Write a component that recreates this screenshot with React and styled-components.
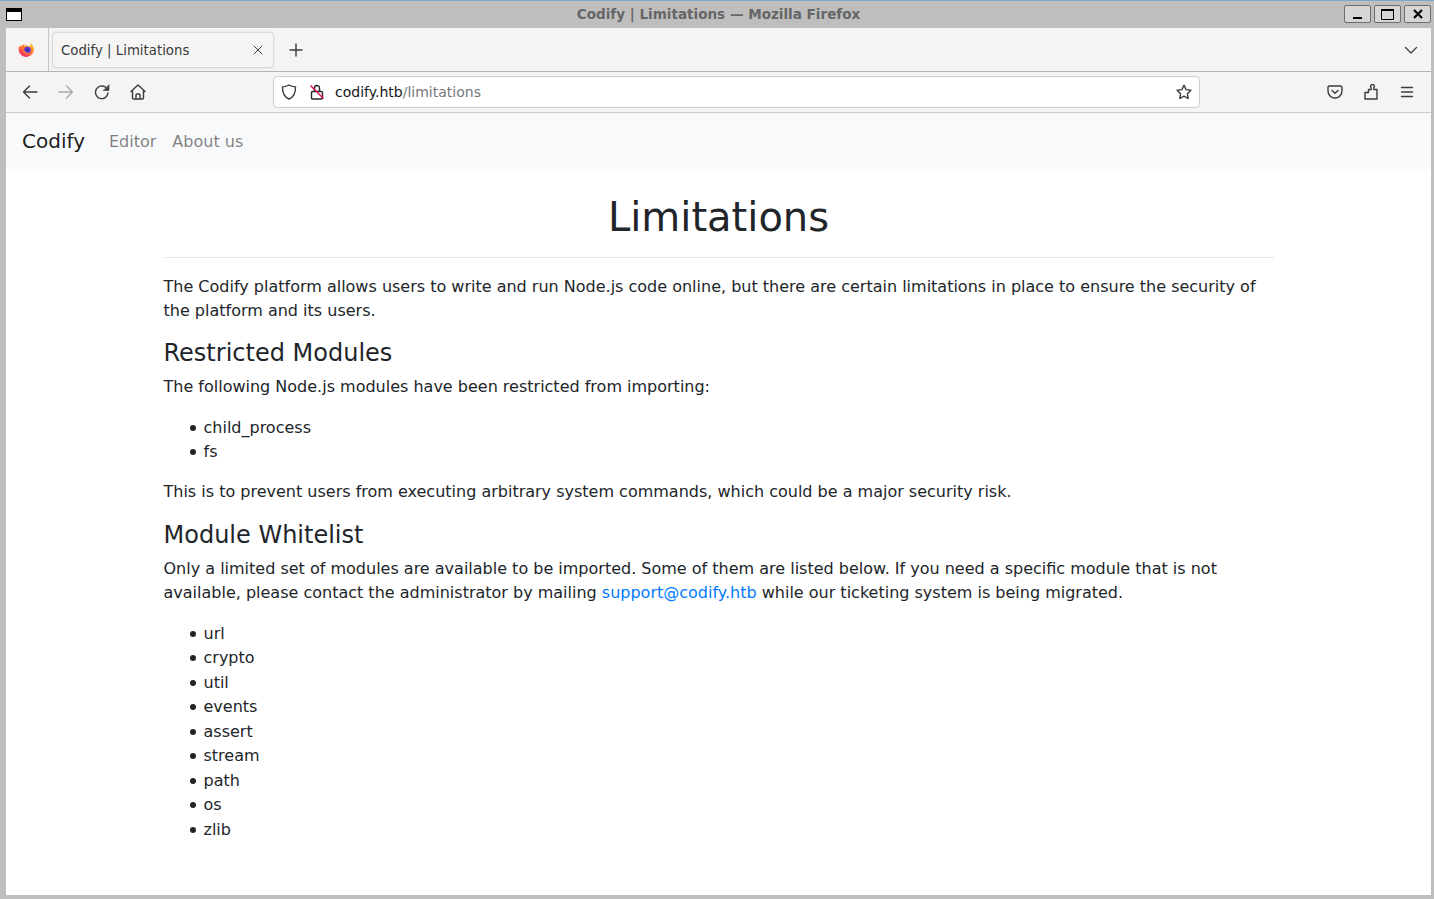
import React from 'react'
import styled, { createGlobalStyle } from 'styled-components'

const Global = createGlobalStyle`
  html, body { margin: 0; padding: 0; overflow: hidden; }
  body { font-family: "DejaVu Sans", sans-serif; }
`

const Desktop = styled.div`
  width: 1434px;
  height: 899px;
  display: flex;
  flex-direction: column;
  background: #bebebe;
  border-top: 1px solid #7fa6c4;
  box-sizing: border-box;
  overflow: hidden;
`

const TitleBar = styled.div`
  height: 27px;
  flex: none;
  display: grid;
  grid-template-columns: 1fr auto 1fr;
  align-items: center;
  padding: 0 3px 0 6px;
`

const WindowMenu = styled.div`
  width: 16px;
  height: 13px;
  box-sizing: border-box;
  border: 1px solid #000;
  border-top-width: 4px;
  background: #fff;
`

const Title = styled.div`
  color: #666;
  font-size: 13.55px;
  font-weight: 700;
  padding-bottom: 2px;
`

const WinButtons = styled.div`
  display: flex;
  justify-content: flex-end;
  gap: 3px;
  margin-top: -1px;
`

const WinButton = styled.div`
  width: 27px;
  height: 18px;
  box-sizing: border-box;
  border: 1px solid #6e6e6e;
  border-radius: 2px;
  background: #d6d6d6;
  display: flex;
  align-items: center;
  justify-content: center;
`

const Browser = styled.div`
  flex: 1;
  min-height: 0;
  margin: 0 3px 4px 6px;
  display: flex;
  flex-direction: column;
  background: #fff;
`

const TabStrip = styled.div`
  height: 44px;
  flex: none;
  display: flex;
  padding-right: 4px;
  background: #f5f4f2;
  border-bottom: 1px solid #b5b4b2;
  box-sizing: border-box;
`

const AppButton = styled.div`
  width: 43px;
  height: 43px;
  flex: none;
  display: flex;
  align-items: center;
  justify-content: center;
  box-sizing: border-box;
  border-right: 1px solid #c6c5c3;
`

const Tab = styled.div`
  width: 222px;
  height: 36px;
  margin: 4px 0 0 3px;
  box-sizing: border-box;
  display: flex;
  align-items: center;
  justify-content: space-between;
  padding: 0 10px 0 8px;
  background: #f6f5f3;
  border: 1px solid #dcdbd9;
  border-radius: 4px;
  box-shadow: 0 0 2px rgba(0, 0, 0, 0.12);
  color: #3a3a3e;
  font-size: 13.3px;
`

const StripIcon = styled.div`
  width: 32px;
  height: 43px;
  flex: none;
  display: flex;
  align-items: center;
  justify-content: center;
  margin-left: ${p => p.$left || 0}px;
`

const Spacer = styled.div`
  flex: 1;
`

const NavBar = styled.div`
  height: 41px;
  flex: none;
  display: flex;
  align-items: center;
  padding: 0 6px 0 6px;
  background: #f5f4f2;
  border-bottom: 1px solid #cfcdc9;
  box-sizing: border-box;
`

const NavIcon = styled.div`
  width: 36px;
  height: 32px;
  flex: none;
  display: flex;
  align-items: center;
  justify-content: center;
`

const UrlBar = styled.div`
  width: 927px;
  height: 32px;
  margin-left: 117px;
  flex: none;
  box-sizing: border-box;
  display: flex;
  align-items: center;
  padding: 0 7px;
  background: #fff;
  border: 1px solid #cfcecc;
  border-radius: 4px;
  font-size: 14px;
`

const UrlIcon = styled.div`
  flex: none;
  display: flex;
  margin-right: ${p => p.$gap || 0}px;
`

const Host = styled.span`
  color: #15141a;
`

const Path = styled.span`
  color: #77767b;
`

const Page = styled.div`
  flex: 1;
  min-height: 0;
  overflow: hidden;
  background: #fff;
  color: #212529;
  font-size: 16px;
  line-height: 24px;
`

const SiteNav = styled.nav`
  height: 56px;
  display: flex;
  align-items: center;
  padding: 0 16px;
  background: #f8f9fa;
`

const Brand = styled.a`
  color: rgba(0, 0, 0, 0.9);
  font-size: 20px;
  margin-right: 16px;
  text-decoration: none;
`

const SiteLink = styled.a`
  color: rgba(0, 0, 0, 0.5);
  padding: 2px 8px 0;
  text-decoration: none;
`

const Container = styled.main`
  width: 1110px;
  margin: 0 auto;
  padding-top: 24px;
`

const Heading = styled.h1`
  margin: 0 0 17px;
  padding-bottom: 16px;
  border-bottom: 1px solid rgba(0, 0, 0, 0.1);
  font-size: 40px;
  font-weight: 500;
  line-height: 48px;
  text-align: center;
`

const Paragraph = styled.p`
  margin: 0 0 ${p => (p.$intro ? 16 : 17)}px;
`

const Subheading = styled.h3`
  margin: 0 0 7px;
  font-size: 24px;
  font-weight: 500;
  line-height: 28.8px;
`

const List = styled.ul`
  margin: 0 0 15px;
  padding: 0 0 0 26px;
  list-style: none;
`

const Item = styled.li`
  line-height: 24.5px;

  &::before {
    content: "";
    display: inline-block;
    width: 6px;
    height: 6px;
    margin-right: 8px;
    border-radius: 50%;
    background: #212529;
    vertical-align: 2px;
  }
`

const MailLink = styled.a`
  color: #007bff;
  text-decoration: none;
`

const stroke = { fill: 'none', stroke: '#3b3b40', strokeWidth: 1.4, strokeLinecap: 'round', strokeLinejoin: 'round' }

const FirefoxLogo = () => (
  <svg width="18" height="18" viewBox="0 0 18 18">
    <defs>
      <linearGradient id="fx" x1="0.8" y1="0" x2="0.2" y2="1">
        <stop offset="0" stopColor="#ffd23a" />
        <stop offset="0.45" stopColor="#ff7a2a" />
        <stop offset="1" stopColor="#f0246e" />
      </linearGradient>
    </defs>
    <path d="M12 1c1 1.500 3.500 3.500 4 7a7.700 7.700 0 1 1-15.200-1.500c.3-1 .8-1.700 1.200-2.200 0 .7.200 1.300.5 1.600C3.600 4.200 5 3.200 7 3.200c-.8.600-1.100 1.200-1 1.700 1.600-1 4.500-.6 5.800 1C12.500 4.500 12.600 2.600 12 1z" fill="url(#fx)" />
    <circle cx="9.500" cy="9" r="3.300" fill="#5b3bd6" />
    <circle cx="9.500" cy="9" r="1.300" fill="#3a1f9e" />
    <path d="M5 8.500c.2 2.600 2 4.300 4.200 4.300 1.300 0 2.300-.5 3-1.300-1.900 1-4.600.4-5.600-1.500C6 9.300 5.500 8.900 5 8.500z" fill="#ff8a2a" />
  </svg>
)

const Back = () => (
  <svg width="16" height="16" viewBox="0 0 16 16" {...stroke}>
    <path d="M15 8H1.500M7.500 2 1.500 8l6 6" />
  </svg>
)

const Forward = () => (
  <svg width="16" height="16" viewBox="0 0 16 16" {...stroke} stroke="#a9a9ab">
    <path d="M1 8h13.500M8.500 2l6 6-6 6" />
  </svg>
)

const Reload = () => (
  <svg width="16" height="16" viewBox="0 0 16 16" {...stroke}>
    <path d="M14 9a6.300 6.300 0 1 1-2.400-5.700" />
    <path d="M15 1v5.500H9.500z" fill="#3b3b40" strokeWidth="0.6" />
  </svg>
)

const Home = () => (
  <svg width="16" height="16" viewBox="0 0 16 16" {...stroke}>
    <path d="M1 7.500 8 1l7 6.500M2.500 6.500V14a1 1 0 0 0 1 1h9a1 1 0 0 0 1-1V6.500" />
    <path d="M6 15v-4a1 1 0 0 1 1-1h2a1 1 0 0 1 1 1v4" />
  </svg>
)

const Shield = () => (
  <svg width="16" height="16" viewBox="0 0 16 16" {...stroke}>
    <path d="M8 1c2 1.200 4 1.700 6.500 1.900C14.700 9 12.500 13 8 15 3.500 13 1.300 9 1.500 2.900 4 2.700 6 2.200 8 1z" />
  </svg>
)

const BrokenLock = () => (
  <svg width="16" height="16" viewBox="0 0 16 16">
    <path d="M5.500 7V4a2.500 2.500 0 0 1 5 0v3M3.500 7.500h9a1 1 0 0 1 1 1V14a1 1 0 0 1-1 1h-9a1 1 0 0 1-1-1V8.500a1 1 0 0 1 1-1z" {...stroke} stroke="#26262b" />
    <path d="M1.500 1.500 14.500 14.500" fill="none" stroke="#e0134e" strokeWidth="1.500" />
  </svg>
)

const Star = () => (
  <svg width="16" height="16" viewBox="0 0 16 16" {...stroke}>
    <path d="M8 1.200l2.100 4.400 4.800.7-3.500 3.400.8 4.800L8 12.200l-4.200 2.300.8-4.800L1.100 6.300l4.800-.7z" />
  </svg>
)

const Pocket = () => (
  <svg width="16" height="16" viewBox="0 0 16 16" {...stroke}>
    <path d="M2.500 2h11A1.500 1.500 0 0 1 15 3.500V7A7 7 0 0 1 1 7V3.500A1.500 1.500 0 0 1 2.500 2z" />
    <path d="M5 6.500 8 9.300l3-2.800" />
  </svg>
)

const Puzzle = () => (
  <svg width="16" height="16" viewBox="0 0 16 16" {...stroke}>
    <path d="M5.500 8.500V5.500H8.200V3.800a1.900 1.900 0 1 1 2.600 0V5.500H14V15H2V8.500z" />
  </svg>
)

const Menu = () => (
  <svg width="16" height="16" viewBox="0 0 16 16" {...stroke}>
    <path d="M2.500 3.500h11M2.500 8h11M2.500 12.500h11" />
  </svg>
)

const CloseX = () => (
  <svg width="10" height="10" viewBox="0 0 10 10" {...stroke} strokeWidth="1">
    <path d="M1 1l8 8M9 1 1 9" />
  </svg>
)

const Plus = () => (
  <svg width="14" height="14" viewBox="0 0 14 14" {...stroke}>
    <path d="M7 1v12M1 7h12" />
  </svg>
)

const Chevron = () => (
  <svg width="14" height="14" viewBox="0 0 14 14" {...stroke} strokeWidth="1.200">
    <path d="M1.500 4.500 7 10l5.500-5.500" />
  </svg>
)

const App = () => {
  return (
    <Desktop>
      <Global />
      <TitleBar>
        <WindowMenu />
        <Title>Codify | Limitations — Mozilla Firefox</Title>
        <WinButtons>
          <WinButton>
            <svg width="13" height="12" viewBox="0 0 13 12"><rect x="2" y="9" width="9" height="2" fill="#000" /></svg>
          </WinButton>
          <WinButton>
            <svg width="13" height="11" viewBox="0 0 13 11"><path d="M.5 1.500h12v9H.5z" fill="none" stroke="#000" strokeWidth="1" /><rect x="0" y="0" width="13" height="2" fill="#000" /></svg>
          </WinButton>
          <WinButton>
            <svg width="10" height="10" viewBox="0 0 10 10"><path d="M1 1l8 8M9 1 1 9" fill="none" stroke="#000" strokeWidth="2.200" /></svg>
          </WinButton>
        </WinButtons>
      </TitleBar>
      <Browser>
        <TabStrip>
          <AppButton><FirefoxLogo /></AppButton>
          <Tab>
            Codify | Limitations
            <CloseX />
          </Tab>
          <StripIcon $left={6}><Plus /></StripIcon>
          <Spacer />
          <StripIcon><Chevron /></StripIcon>
        </TabStrip>
        <NavBar>
          <NavIcon><Back /></NavIcon>
          <NavIcon><Forward /></NavIcon>
          <NavIcon><Reload /></NavIcon>
          <NavIcon><Home /></NavIcon>
          <UrlBar>
            <UrlIcon $gap={12}><Shield /></UrlIcon>
            <UrlIcon $gap={10}><BrokenLock /></UrlIcon>
            <Host>codify.htb</Host><Path>/limitations</Path>
            <Spacer />
            <UrlIcon><Star /></UrlIcon>
          </UrlBar>
          <Spacer />
          <NavIcon><Pocket /></NavIcon>
          <NavIcon><Puzzle /></NavIcon>
          <NavIcon><Menu /></NavIcon>
        </NavBar>
        <Page>
          <SiteNav>
            <Brand href="#">Codify</Brand>
            <SiteLink href="#">Editor</SiteLink>
            <SiteLink href="#">About us</SiteLink>
          </SiteNav>
          <Container>
            <Heading>Limitations</Heading>
            <Paragraph $intro>The Codify platform allows users to write and run Node.js code online, but there are certain limitations in place to ensure the security of the platform and its users.</Paragraph>
            <Subheading>Restricted Modules</Subheading>
            <Paragraph>The following Node.js modules have been restricted from importing:</Paragraph>
            <List>
              <Item>child_process</Item>
              <Item>fs</Item>
            </List>
            <Paragraph>This is to prevent users from executing arbitrary system commands, which could be a major security risk.</Paragraph>
            <Subheading>Module Whitelist</Subheading>
            <Paragraph>Only a limited set of modules are available to be imported. Some of them are listed below. If you need a specific module that is not available, please contact the administrator by mailing <MailLink href="#">support@codify.htb</MailLink> while our ticketing system is being migrated.</Paragraph>
            <List>
              {['url', 'crypto', 'util', 'events', 'assert', 'stream', 'path', 'os', 'zlib'].map(name => (
                <Item key={name}>{name}</Item>
              ))}
            </List>
          </Container>
        </Page>
      </Browser>
    </Desktop>
  )
}

export default App
